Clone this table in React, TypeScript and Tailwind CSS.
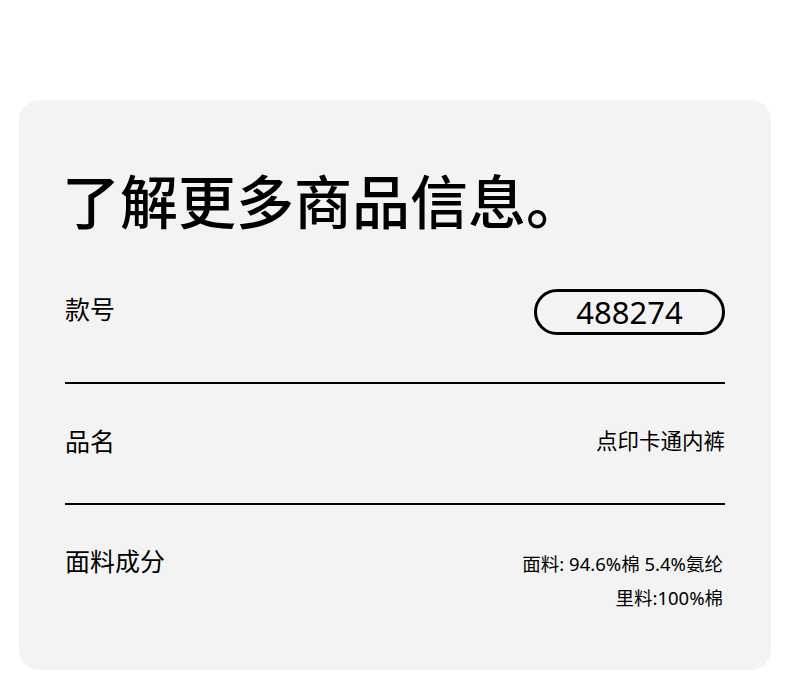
export default function App() {
  const font = { fontFamily: '"Noto Sans", "Noto Sans CJK SC", sans-serif' };
  return (
    <div className="w-full min-h-screen bg-white pt-[100px] px-[19px]" style={font}>
      <div className="bg-[#f3f3f3] rounded-[20px] px-[46px] pt-[62px] pb-[55px] text-black">
        <h1 className="text-[58px] leading-[80px] font-medium -ml-[3px]">了解更多商品信息。</h1>

        <div className="mt-[47px] flex items-start justify-between pb-[47px] border-b-2 border-black">
          <span className="text-[25px] leading-[40px]">款号</span>
          <span className="w-[191px] h-[46px] rounded-full border-[3px] border-black flex items-center justify-center text-[31px] leading-none">
            488274
          </span>
        </div>

        <div className="flex items-start justify-between pt-[37px] pb-[42px] border-b-2 border-black">
          <span className="text-[25px] leading-[40px]">品名</span>
          <span className="text-[21.5px] leading-[40px]">点印卡通内裤</span>
        </div>

        <div className="flex items-start justify-between pt-[36px]">
          <span className="text-[25px] leading-[40px]">面料成分</span>
          <div className="text-right text-[18.5px] leading-[34px] pt-[6px] pr-[2px]">
            <div>面料: 94.6%棉 5.4%氨纶</div>
            <div>里料:100%棉</div>
          </div>
        </div>
      </div>
    </div>
  );
}
